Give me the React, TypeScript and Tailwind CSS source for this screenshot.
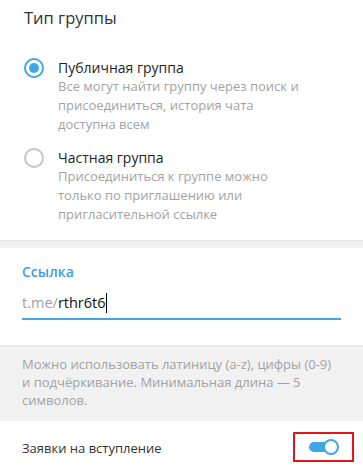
import React from "react";

function Radio({ checked }: { checked: boolean }) {
  return (
    <svg width="20" height="20" viewBox="0 0 20 20" className="shrink-0">
      <circle
        cx="10"
        cy="10"
        r="9"
        fill="none"
        stroke={checked ? "#40a7e3" : "#c4c4c4"}
        strokeWidth="2"
      />
      {checked && <circle cx="10" cy="10" r="5" fill="#40a7e3" />}
    </svg>
  );
}

export default function App() {
  return (
    <div
      className="w-[363px] h-[476px] overflow-hidden bg-white"
      style={{ fontFamily: '"Open Sans", "Noto Sans", sans-serif' }}
    >
      {/* Section 1 */}
      <div className="h-[240px] pt-[7px]">
        <div className="pl-[24px] text-[16.5px] leading-[22px] font-medium text-[#333333]">
          Тип группы
        </div>
        <div className="mt-[29px] flex flex-col gap-[14px]">
          <div className="flex pl-[24px]">
            <div>
              <Radio checked />
            </div>
            <div className="ml-[14px]">
              <div className="text-[14px] leading-[19px] text-[#222222]">
                Публичная группа
              </div>
              <div className="text-[13px] leading-[19px] text-[#a3a3a3] w-[250px]">
                Все могут найти группу через поиск и присоединиться, история
                чата доступна всем
              </div>
            </div>
          </div>
          <div className="flex pl-[24px]">
            <div>
              <Radio checked={false} />
            </div>
            <div className="ml-[14px]">
              <div className="text-[14px] leading-[19px] text-[#222222]">
                Частная группа
              </div>
              <div className="text-[13px] leading-[19px] text-[#a3a3a3] w-[230px]">
                Присоединиться к группе можно только по приглашению или
                пригласительной ссылке
              </div>
            </div>
          </div>
        </div>
      </div>

      {/* Divider */}
      <div className="h-[8px] bg-[#f1f1f1] border-t border-[#e4e4e4]" />

      {/* Section 2 */}
      <div className="h-[97px] px-[22px] pt-[14px]">
        <div className="text-[14px] leading-[20px] font-semibold text-[#3d9edb]">
          Ссылка
        </div>
        <div className="mt-[11px] h-[27px] border-b-2 border-[#40a7e3] flex items-start">
          <span className="text-[14.5px] leading-[20px] text-[#a0a0a0]">t.me/</span>
          <span className="text-[14.5px] leading-[20px] text-[#111111]">rthr6t6</span>
          <span className="w-px h-[20px] bg-black" />
        </div>
      </div>

      {/* Hint */}
      <div className="h-[76px] bg-[#f1f1f1] border-t border-[#e6e6e6] px-[22px] pt-[9px]">
        <div className="text-[13px] leading-[18px] text-[#a3a3a3] w-[312px]">
          Можно использовать латиницу (a-z), цифры (0-9) и подчёркивание.
          Минимальная длина — 5 символов.
        </div>
      </div>

      {/* Toggle row */}
      <div className="h-[55px] flex items-center justify-between pl-[22px] pr-[9px]">
        <div className="text-[13px] leading-[20px] text-[#333333] -mt-[2px]">
          Заявки на вступление
        </div>
        <div className="w-[61px] h-[30px] border-2 border-[#e8141b] flex items-center justify-center -mt-[3px]">
          <div className="relative w-[30px] h-[16px]">
            <div className="absolute left-0 top-[3px] w-[26px] h-[10px] rounded-full bg-[#40a7e3]" />
            <div className="absolute right-0 top-0 w-[16px] h-[16px] rounded-full bg-white border-2 border-[#40a7e3]" />
          </div>
        </div>
      </div>
    </div>
  );
}
